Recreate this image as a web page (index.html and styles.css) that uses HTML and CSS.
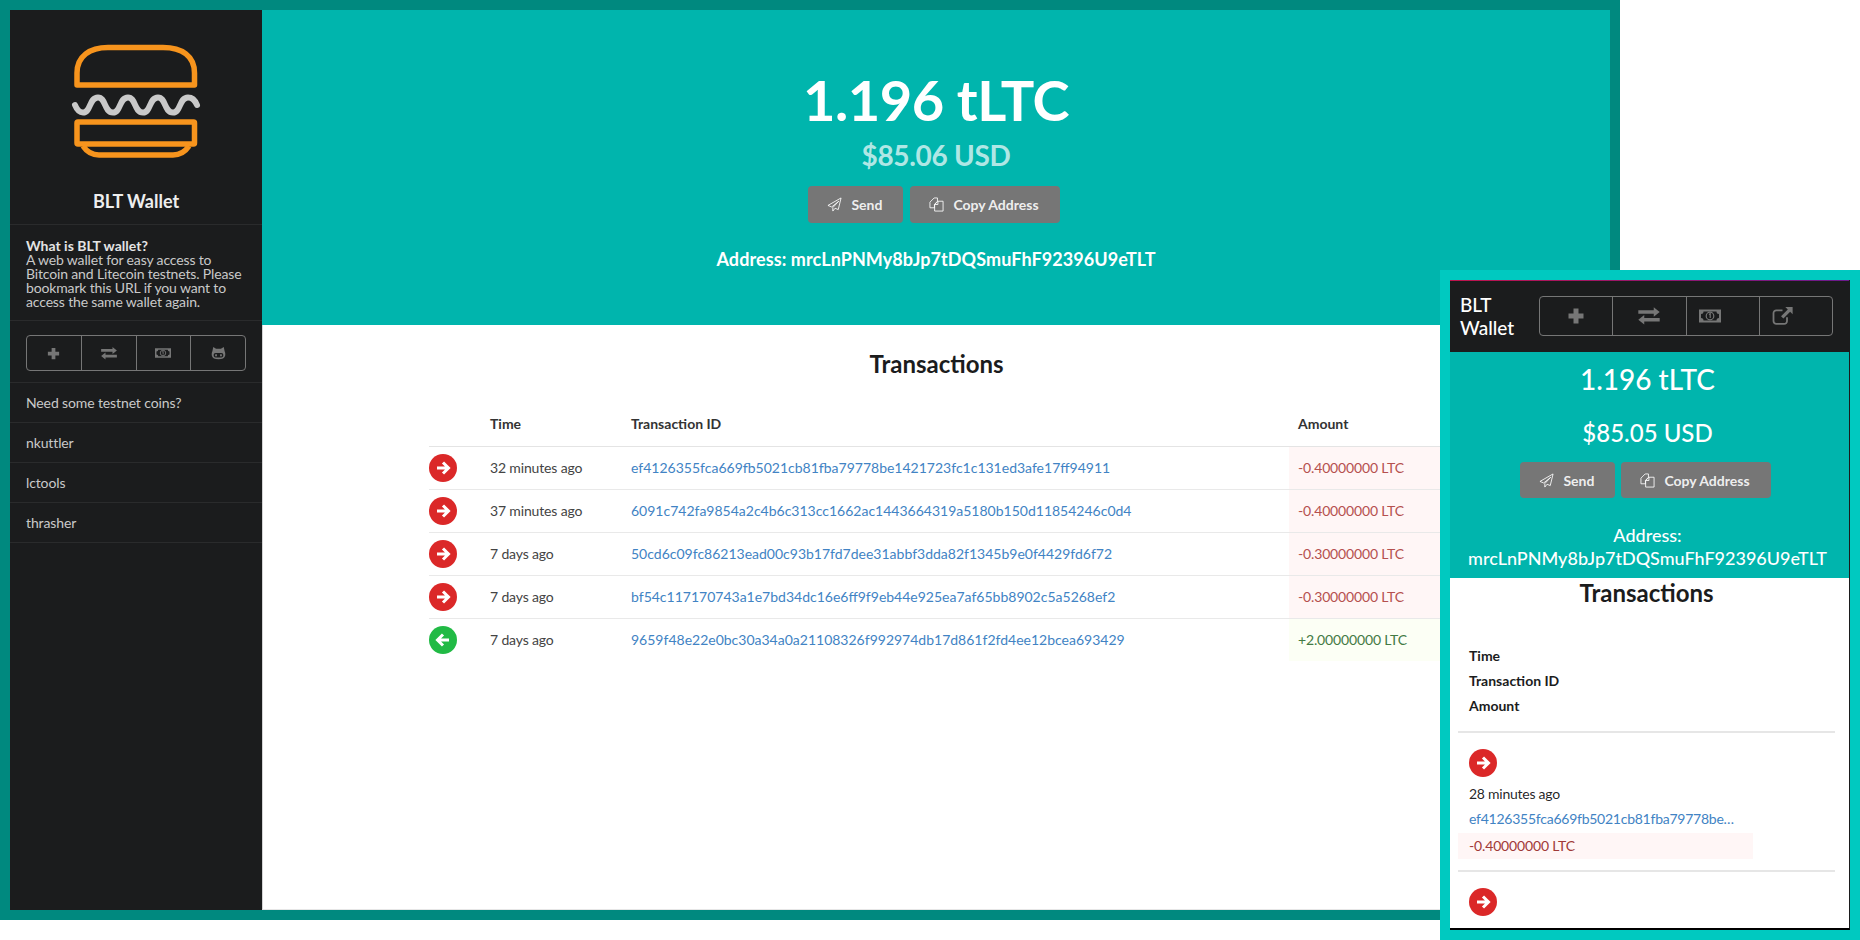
FILE: index.html
```html
<!DOCTYPE html>
<html lang="en">
<head>
  <meta charset="UTF-8">
  <meta name="viewport" content="width=device-width, initial-scale=1.0">
  <title>BLT Wallet</title>
  <link rel="stylesheet" href="styles.css">
</head>
<body>

<svg class="sprites" xmlns="http://www.w3.org/2000/svg">
  <symbol id="i-plus" viewBox="0 0 16 16">
    <path d="M6 2h4v4h4v4h-4v4H6v-4H2V6h4z" fill="currentColor"/>
  </symbol>
  <symbol id="i-exchange" viewBox="0 0 20 16">
    <path d="M1 3.500h13V1l5 4-5 4V6.500H1zM19 10H6V7.500l-5 4 5 4V13h13z" fill="currentColor"/>
  </symbol>
  <symbol id="i-money" viewBox="0 0 22 16">
    <path fill-rule="evenodd" d="M0 1.500h22v13H0zM4.500 3.500a2.500 2.500 0 0 1-2.500 2.500v4a2.500 2.500 0 0 1 2.500 2.500h13a2.500 2.500 0 0 1 2.500-2.500V6a2.500 2.500 0 0 1-2.500-2.500z" fill="currentColor"/>
    <circle cx="11" cy="8" r="3.800" fill="none" stroke="currentColor" stroke-width="1.200"/>
    <path d="M10 6.500l1.200-.8V10" fill="none" stroke="currentColor" stroke-width="1.200"/>
  </symbol>
  <symbol id="i-cat" viewBox="0 0 16 16">
    <path fill-rule="evenodd" d="M2 1l3.200 2h5.600L14 1l1 5c.7 1.500 1 3.200.6 5-.6 2.800-3.300 4-7.600 4s-7-1.200-7.600-4c-.4-1.800-.1-3.500.6-5zM4.800 8C3.200 8 2.500 9 2.500 10.500S3.200 13 4.800 13h6.400c1.600 0 2.300-1 2.300-2.500S12.800 8 11.200 8z" fill="currentColor"/>
    <ellipse cx="5.200" cy="10.500" rx="1" ry="1.500" fill="currentColor"/>
    <ellipse cx="10.800" cy="10.500" rx="1" ry="1.500" fill="currentColor"/>
  </symbol>
  <symbol id="i-external" viewBox="0 0 18 16">
    <path d="M9 3H3.500A2.500 2.500 0 0 0 1 5.500v7A2.500 2.500 0 0 0 3.500 15h7a2.500 2.500 0 0 0 2.500-2.500V9" fill="none" stroke="currentColor" stroke-width="1.600"/>
    <path d="M11.500 0H18v6.500l-2.200-2.200-6 6-2.100-2.100 6-6z" fill="currentColor"/>
  </symbol>
  <symbol id="i-plane" viewBox="0 0 16 16">
    <path d="M15 1L1 9l4 1.600L12.500 4.500 6.200 11.300V15l2.400-3 3.400 1.400z" fill="none" stroke="currentColor" stroke-width="1" stroke-linejoin="round"/>
  </symbol>
  <symbol id="i-copy" viewBox="0 0 16 16">
    <path d="M5.500 1H9v3.500L5.800 8v3.500H1V5.500z" fill="none" stroke="currentColor" stroke-width="1" stroke-linejoin="round"/>
    <path d="M9.500 4.500H15V15H6V8zM9.500 4.500V8H6" fill="none" stroke="currentColor" stroke-width="1" stroke-linejoin="round"/>
  </symbol>
  <symbol id="i-right" viewBox="0 0 28 28">
    <circle cx="14" cy="14" r="14" fill="currentColor"/>
    <path d="M8 14h11M14 8.500l5.500 5.500-5.500 5.500" fill="none" stroke="#fff" stroke-width="3"/>
  </symbol>
  <symbol id="i-left" viewBox="0 0 28 28">
    <circle cx="14" cy="14" r="14" fill="currentColor"/>
    <path d="M20 14H9M14 8.500L8.500 14l5.500 5.500" fill="none" stroke="#fff" stroke-width="3"/>
  </symbol>
</svg>

<div class="window">
  <aside class="sidebar">
    <div class="brand">
      <svg class="logo" viewBox="70 43 132 116" xmlns="http://www.w3.org/2000/svg">
        <g fill="none" stroke="#f7941d" stroke-width="5.500" stroke-linejoin="round">
          <path d="M77 85V73C77 56 90 47.500 108 47.500H163C182 47.500 194.500 56 194.500 73V85Z"/>
          <rect x="77" y="122" width="117.500" height="22" rx="1"/>
          <path d="M83 146C87 152 92 155 99 155H173C180 155 185 152 189 146"/>
        </g>
        <path d="M75 105C77 110 79 112.500 83 112.500C91 112.500 89 97.500 98 97.500C106 97.500 104 112.500 113 112.500C121 112.500 119 97.500 128 97.500C136 97.500 134 112.500 143 112.500C151 112.500 149 97.500 158 97.500C166 97.500 164 112.500 173 112.500C181 112.500 179 97.500 188 97.500C192 97.500 195 100 197 105" fill="none" stroke="#c9c9c9" stroke-width="6" stroke-linecap="round"/>
      </svg>
      <div class="brand-name">BLT Wallet</div>
    </div>
    <div class="about">
      <strong>What is BLT wallet?</strong><br>
      A web wallet for easy access to Bitcoin and Litecoin testnets. Please bookmark this URL if you want to access the same wallet again.
    </div>
    <div class="side-actions">
      <div class="icon-group">
        <span class="icon-cell"><svg class="icon-plus"><use href="#i-plus"/></svg></span>
        <span class="icon-cell"><svg class="icon-exchange"><use href="#i-exchange"/></svg></span>
        <span class="icon-cell"><svg class="icon-money"><use href="#i-money"/></svg></span>
        <span class="icon-cell"><svg class="icon-cat"><use href="#i-cat"/></svg></span>
      </div>
    </div>
    <a class="side-link">Need some testnet coins?</a>
    <a class="side-link">nkuttler</a>
    <a class="side-link">lctools</a>
    <a class="side-link">thrasher</a>
  </aside>

  <main class="content">
    <section class="hero">
      <h1 class="balance">1.196 tLTC</h1>
      <div class="fiat">$85.06 USD</div>
      <div class="hero-buttons">
        <button class="btn"><svg class="btn-icon"><use href="#i-plane"/></svg>Send</button>
        <button class="btn"><svg class="btn-icon"><use href="#i-copy"/></svg>Copy Address</button>
      </div>
      <div class="address">Address: mrcLnPNMy8bJp7tDQSmuFhF92396U9eTLT</div>
    </section>

    <section class="transactions">
      <h2 class="tx-title">Transactions</h2>
      <table class="tx-table">
        <thead>
          <tr><th class="col-dir"></th><th class="col-time">Time</th><th>Transaction ID</th><th class="col-amount">Amount</th></tr>
        </thead>
        <tbody>
          <tr>
            <td><svg class="dir out"><use href="#i-right"/></svg></td>
            <td>32 minutes ago</td>
            <td><a class="tx-link">ef4126355fca669fb5021cb81fba79778be1421723fc1c131ed3afe17ff94911</a></td>
            <td class="amount neg">-0.40000000 LTC</td>
          </tr>
          <tr>
            <td><svg class="dir out"><use href="#i-right"/></svg></td>
            <td>37 minutes ago</td>
            <td><a class="tx-link">6091c742fa9854a2c4b6c313cc1662ac1443664319a5180b150d11854246c0d4</a></td>
            <td class="amount neg">-0.40000000 LTC</td>
          </tr>
          <tr>
            <td><svg class="dir out"><use href="#i-right"/></svg></td>
            <td>7 days ago</td>
            <td><a class="tx-link">50cd6c09fc86213ead00c93b17fd7dee31abbf3dda82f1345b9e0f4429fd6f72</a></td>
            <td class="amount neg">-0.30000000 LTC</td>
          </tr>
          <tr>
            <td><svg class="dir out"><use href="#i-right"/></svg></td>
            <td>7 days ago</td>
            <td><a class="tx-link">bf54c117170743a1e7bd34dc16e6ff9f9eb44e925ea7af65bb8902c5a5268ef2</a></td>
            <td class="amount neg">-0.30000000 LTC</td>
          </tr>
          <tr>
            <td><svg class="dir in"><use href="#i-left"/></svg></td>
            <td>7 days ago</td>
            <td><a class="tx-link">9659f48e22e0bc30a34a0a21108326f992974db17d861f2fd4ee12bcea693429</a></td>
            <td class="amount pos">+2.00000000 LTC</td>
          </tr>
        </tbody>
      </table>
    </section>
  </main>
</div>

<div class="phone">
  <div class="phone-screen">
    <header class="phone-bar">
      <div class="phone-name">BLT Wallet</div>
      <div class="icon-group phone-icons">
        <span class="icon-cell"><svg class="icon-plus"><use href="#i-plus"/></svg></span>
        <span class="icon-cell"><svg class="icon-exchange"><use href="#i-exchange"/></svg></span>
        <span class="icon-cell"><svg class="icon-money"><use href="#i-money"/></svg></span>
        <span class="icon-cell"><svg class="icon-external"><use href="#i-external"/></svg></span>
      </div>
    </header>
    <section class="phone-hero">
      <div class="phone-balance">1.196 tLTC</div>
      <div class="phone-fiat">$85.05 USD</div>
      <div class="phone-buttons">
        <button class="btn"><svg class="btn-icon"><use href="#i-plane"/></svg>Send</button>
        <button class="btn"><svg class="btn-icon"><use href="#i-copy"/></svg>Copy Address</button>
      </div>
      <div class="phone-address">Address:<br>mrcLnPNMy8bJp7tDQSmuFhF92396U9eTLT</div>
    </section>
    <section class="phone-tx">
      <h2 class="phone-title">Transactions</h2>
      <div class="phone-head">
        <div>Time</div>
        <div>Transaction ID</div>
        <div>Amount</div>
      </div>
      <div class="phone-row">
        <svg class="dir out"><use href="#i-right"/></svg>
        <div class="phone-time">28 minutes ago</div>
        <a class="tx-link phone-link">ef4126355fca669fb5021cb81fba79778be1421723fc1c131ed3afe17ff94911</a>
        <div class="phone-amount">-0.40000000 LTC</div>
      </div>
      <div class="phone-row phone-row-last">
        <svg class="dir out"><use href="#i-right"/></svg>
      </div>
    </section>
  </div>
</div>

</body>
</html>
```

FILE: styles.css
```css
* {
  box-sizing: border-box;
}

body {
  margin: 0;
  width: 1860px;
  height: 940px;
  position: relative;
  overflow: hidden;
  background-color: #fff;
  font-family: 'Lato', sans-serif;
  font-size: 14px;
  color: rgba(0, 0, 0, 0.87);
}

.sprites {
  display: none;
}

/* main window */
.window {
  display: flex;
  width: 1620px;
  height: 920px;
  border: 10px solid #00897f;
}

.sidebar {
  width: 252px;
  flex-shrink: 0;
  background-color: #1b1c1d;
  color: rgba(255, 255, 255, 0.9);
}

.brand {
  height: 215px;
  padding-top: 33px;
  border-bottom: 1px solid #2a2b2c;
  text-align: center;
}

.logo {
  display: block;
  width: 132px;
  height: 116px;
  margin: 0 auto;
}

.brand-name {
  margin-top: 30px;
  font-size: 18px;
  line-height: 24px;
  font-weight: 700;
  color: #eee;
}

.about {
  height: 96px;
  padding: 14px 16px 0;
  border-bottom: 1px solid #2a2b2c;
  font-size: 14px;
  line-height: 14px;
  letter-spacing: -0.15px;
  color: #c9c9c9;
}

.about strong {
  letter-spacing: 0;
  color: #e4e4e4;
}

.side-actions {
  height: 62px;
  padding: 14px 16px 0;
  border-bottom: 1px solid #2a2b2c;
}

.icon-group {
  display: flex;
  height: 36px;
  border: 1px solid #767676;
  border-radius: 4px;
  color: #767676;
}

.icon-cell {
  flex: 1;
  display: flex;
  align-items: center;
  justify-content: center;
  border-left: 1px solid #767676;
}

.icon-cell:first-child {
  border-left: none;
}

.icon-plus {
  width: 15px;
  height: 15px;
}

.icon-exchange {
  width: 18px;
  height: 14px;
}

.icon-money {
  width: 16px;
  height: 12px;
}

.icon-cat {
  width: 15px;
  height: 14px;
}

.icon-external {
  width: 21px;
  height: 18px;
}

.side-link {
  display: block;
  height: 40px;
  padding-left: 16px;
  border-bottom: 1px solid #2a2b2c;
  line-height: 40px;
  letter-spacing: -0.12px;
  color: #c9c9c9;
}

.content {
  flex: 1;
  display: flex;
  flex-direction: column;
  min-width: 0;
}

.hero {
  height: 315px;
  padding-top: 62px;
  background-color: #00b5ad;
  color: #fff;
  text-align: center;
}

.balance {
  margin: 0;
  font-size: 56px;
  line-height: 56px;
  font-weight: 700;
  letter-spacing: -0.5px;
}

.fiat {
  margin-top: 13px;
  font-size: 28px;
  line-height: 28px;
  font-weight: 700;
  letter-spacing: -0.3px;
  color: rgba(255, 255, 255, 0.7);
}

.hero-buttons {
  display: flex;
  justify-content: center;
  gap: 7px;
  margin-top: 17px;
  padding-right: 4px;
}

.btn {
  display: flex;
  align-items: center;
  height: 37px;
  padding: 0 21px 0 19px;
  border: none;
  border-radius: 4px;
  background-color: #767676;
  color: rgba(255, 255, 255, 0.9);
  font-family: inherit;
  font-size: 14px;
  font-weight: 700;
}

.btn-icon {
  width: 15px;
  height: 15px;
  margin-right: 9px;
}

.address {
  margin-top: 25px;
  font-size: 18px;
  line-height: 22px;
  font-weight: 700;
  letter-spacing: 0.08px;
}

.transactions {
  flex: 1;
  background-color: #fff;
  border-left: 1px solid #d4d4d5;
  border-bottom: 1px solid #e6e6e6;
}

.tx-title {
  margin: 24px 0 0;
  font-size: 24px;
  line-height: 30px;
  font-weight: 700;
  text-align: center;
  color: #1b1c1d;
}

.tx-table {
  width: 1014px;
  margin: 25px 0 0 166px;
  border-collapse: collapse;
  table-layout: fixed;
}

.tx-table th {
  height: 42px;
  padding: 0 11px 2px;
  border-bottom: 1px solid #e4e4e4;
  font-weight: 700;
  text-align: left;
  color: #333;
}

.tx-table td {
  height: 43px;
  padding: 0 11px;
  border-bottom: 1px solid #e9e9e9;
  letter-spacing: -0.15px;
  color: #444;
}

.tx-table td:first-child {
  padding: 0;
}

.tx-table tr:last-child td {
  border-bottom: none;
}

.col-dir {
  width: 50px;
}

.col-time {
  width: 141px;
}

.col-amount {
  width: 154px;
}

.tx-table .col-amount,
.tx-table .amount {
  padding-left: 9px;
}

.tx-link {
  letter-spacing: 0;
  color: #4183c4;
}

.dir {
  display: block;
  width: 28px;
  height: 28px;
}

.dir.out {
  color: #db2828;
}

.dir.in {
  color: #21ba45;
}

.tx-table .neg {
  background-color: #fff6f6;
  color: #b5504e;
}

.tx-table .pos {
  background-color: #fcfff5;
  color: #437a44;
}

/* phone window on top */
.phone {
  position: absolute;
  left: 1440px;
  top: 270px;
  width: 420px;
  height: 670px;
  padding: 10px;
  background-color: #00c9c0;
}

.phone-screen {
  height: 650px;
  overflow: hidden;
  background-color: #fff;
  border-right: 1px solid #1b1c1d;
  border-bottom: 2px solid #000;
}

.phone-bar {
  display: flex;
  align-items: center;
  height: 72px;
  padding: 0 16px 2px 10px;
  background-color: #1b1c1d;
  border-top: 1px solid;
  border-image: linear-gradient(to right, #c0144c, #6a1a8c) 1;
}

.phone-name {
  width: 79px;
  flex-shrink: 0;
  font-size: 19px;
  line-height: 23px;
  font-weight: 500;
  color: #fff;
}

.phone-icons {
  flex: 1;
  height: 40px;
}

.phone-icons .icon-plus {
  width: 20px;
  height: 20px;
}

.phone-icons .icon-exchange {
  width: 24px;
  height: 19px;
}

.phone-icons .icon-money,
.phone-icons .icon-external {
  margin-right: 26px;
}

.phone-icons .icon-money {
  width: 22px;
  height: 16px;
}

.phone-hero {
  height: 226px;
  padding: 13px 4px 0 0;
  background-color: #00b5ad;
  color: #fff;
  text-align: center;
}

.phone-balance {
  font-size: 28px;
  line-height: 28px;
  font-weight: 500;
}

.phone-fiat {
  margin-top: 26px;
  font-size: 24px;
  line-height: 28px;
  font-weight: 500;
}

.phone-buttons {
  display: flex;
  justify-content: center;
  gap: 6px;
  margin-top: 15px;
  padding-right: 4px;
}

.phone-buttons .btn {
  height: 36px;
}

.phone-address {
  margin-top: 26px;
  font-size: 18px;
  line-height: 23px;
  font-weight: 500;
}

.phone-tx {
  padding: 0 14px 0 8px;
}

.phone-title {
  margin: 0;
  font-size: 24px;
  line-height: 30px;
  font-weight: 700;
  text-align: center;
  color: #1b1c1d;
}

.phone-head {
  padding: 35px 0 13px 11px;
  border-bottom: 2px solid #e6e6e6;
  line-height: 25px;
  font-weight: 700;
  color: #1b1c1d;
}

.phone-row {
  padding-top: 16px;
  border-bottom: 2px solid #e6e6e6;
}

.phone-row-last {
  border-bottom: none;
}

.phone-row .dir {
  margin-left: 11px;
}

.phone-time {
  margin: 8px 0 0 11px;
  line-height: 18px;
  letter-spacing: -0.25px;
}

.phone-link {
  display: block;
  width: 270px;
  margin: 7px 0 0 11px;
  line-height: 18px;
  letter-spacing: -0.25px;
  white-space: nowrap;
  overflow: hidden;
  text-overflow: ellipsis;
}

.phone-amount {
  width: 295px;
  height: 26px;
  margin: 5px 0 11px;
  padding-left: 11px;
  background-color: #fff6f6;
  color: #9f3a38;
  line-height: 26px;
  letter-spacing: -0.15px;
}
```
